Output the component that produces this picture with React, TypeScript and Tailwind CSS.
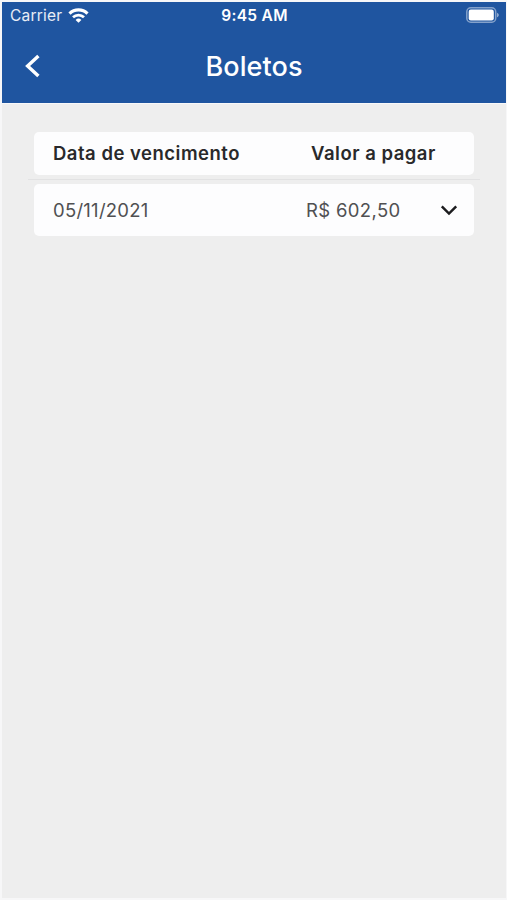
import React from 'react';

interface Boleto {
  dueDate: string;
  amount: string;
}

const boletos: Boleto[] = [{ dueDate: '05/11/2021', amount: 'R$ 602,50' }];

const WifiIcon: React.FC = () => (
  <svg width="21" height="15" viewBox="0 0 21 15" fill="none" stroke="white" strokeWidth="3.1">
    <path d="M1.5 5.6a12.7 12.7 0 0 1 18 0" />
    <path d="M5 9.3a7.8 7.8 0 0 1 11 0" strokeWidth="2.7" />
    <path d="M10.5 14.8l-2.9-2.9a4.1 4.1 0 0 1 5.8 0z" fill="white" stroke="none" />
  </svg>
);

const BatteryIcon: React.FC = () => (
  <svg width="33" height="16" viewBox="0 0 33 16" fill="none">
    <rect x="0.8" y="0.8" width="28.9" height="14.4" rx="4" stroke="white" strokeOpacity="0.45" strokeWidth="1.5" />
    <rect x="2.7" y="2.5" width="25.1" height="11" rx="2.2" fill="white" />
    <path d="M31 5.7c1.1.4 1.8 1.3 1.8 2.3s-.7 1.9-1.8 2.3z" fill="white" fillOpacity="0.5" />
  </svg>
);

const StatusBar: React.FC = () => (
  <div className="grid h-[26px] grid-cols-3 items-center pl-2 pr-[7px] text-[15.5px] leading-none text-white">
    <div className="flex items-center gap-1.5">
      <span className="pt-0.5 tracking-[0.2px] text-white/90">Carrier</span>
      <WifiIcon />
    </div>
    <span className="pt-0.5 text-center font-semibold tracking-[0.3px]">9:45 AM</span>
    <div className="flex justify-end">
      <BatteryIcon />
    </div>
  </div>
);

const Header: React.FC = () => (
  <header className="h-[101px] bg-[#1f55a0]">
    <StatusBar />
    <div className="grid h-[76px] grid-cols-[60px_1fr_60px] items-center text-white">
      <button type="button" aria-label="Voltar" className="pl-[22px]">
        <svg width="18" height="24" viewBox="0 0 18 24" fill="none" stroke="white" strokeWidth="3.4">
          <path d="M14.4 1.9L3.6 12l10.8 10.1" />
        </svg>
      </button>
      <h1 className="text-center text-[27px] font-[550] leading-none tracking-[0.1px]">Boletos</h1>
    </div>
  </header>
);

const BoletoRow: React.FC<Boleto> = ({ dueDate, amount }) => (
  <div className="mx-1.5 flex h-[52px] items-center rounded-[5px] bg-[#fdfdfe] pl-[19px] text-[18.5px] leading-7 text-[#505052]">
    <span className="w-[253px] pb-px tracking-[0.25px]">{dueDate}</span>
    <span className="w-[133px] pb-px tracking-[0.35px]">{amount}</span>
    <svg width="20" height="14" viewBox="0 0 20 14" fill="none" stroke="#1c1c1e" strokeWidth="2.5">
      <path d="M2.8 3.4L10 10.6l7.2-7.2" />
    </svg>
  </div>
);

export default function App() {
  return (
    <div className="h-[900px] w-[507px] bg-[#f7f7f8] pb-0.5 pl-0.5 pr-px pt-0.5 font-['Inter',sans-serif]">
      <div className="h-[896px] bg-[#eeeeee]">
        <Header />
        <div className="h-px bg-[#f8f8f9]" />
        <main className="px-[26px] pt-7">
          <div className="mx-1.5 flex h-[43px] items-center rounded-[5px] bg-[#fdfdfe] pb-0.5 pl-[19px] text-[18.5px] font-semibold leading-7 text-[#29292b]">
            <span className="w-[258px] tracking-[0.5px]">Data de vencimento</span>
            <span className="tracking-[0.5px]">Valor a pagar</span>
          </div>
          <div className="mb-1 mt-1 h-px bg-[#e2e2e3]" />
          {boletos.map((boleto) => (
            <BoletoRow key={boleto.dueDate} {...boleto} />
          ))}
        </main>
      </div>
    </div>
  );
}
